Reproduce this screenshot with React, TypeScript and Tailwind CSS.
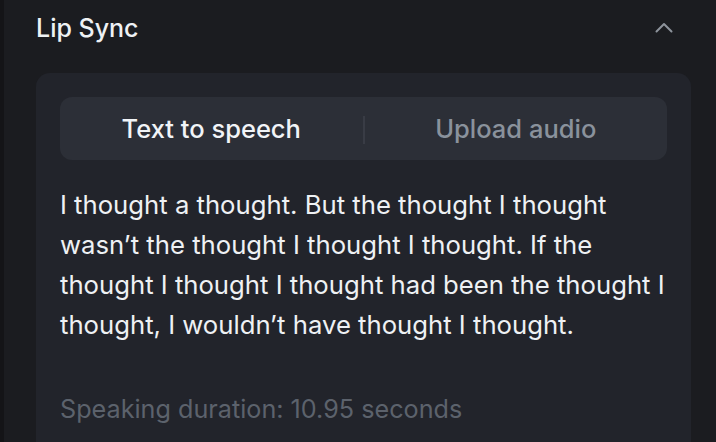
import React from 'react';

const App = () => {
  const [tab, setTab] = React.useState<'tts' | 'upload'>('tts');

  return (
    <div
      className="flex w-full h-[442px] overflow-hidden bg-[#1b1c20]"
      style={{ fontFamily: 'Inter, "Noto Sans", sans-serif' }}
    >
      <div className="w-1 shrink-0 bg-[#141417]" />
      <div className="flex-grow flex flex-col pl-8 pr-[25px]">
        <div className="flex items-center justify-between pt-[9px] pb-[25px]">
          <span className="text-[25px] leading-[39px] font-medium text-[#eef1f4]">
            Lip Sync
          </span>
          <svg
            width="18"
            height="11"
            viewBox="0 0 18 11"
            fill="none"
            className="mr-[18px] mt-[-2px]"
          >
            <polyline
              points="1.5,9.5 9,2 16.5,9.5"
              stroke="#8d939b"
              strokeWidth="2"
              strokeLinecap="round"
              strokeLinejoin="round"
            />
          </svg>
        </div>
        <div className="flex-grow rounded-t-[14px] bg-[#22242b] px-6 pt-6">
          <div className="flex items-center h-[63px] pt-[2px] rounded-[12px] bg-[#2c2f37]">
            <button
              onClick={() => setTab('tts')}
              className={`flex-1 text-center text-[25.5px] font-medium ${
                tab === 'tts' ? 'text-[#f1f4f7]' : 'text-[#8a929c]'
              }`}
            >
              Text to speech
            </button>
            <div className="w-[2px] h-[28px] bg-[#393c45]" />
            <button
              onClick={() => setTab('upload')}
              className={`flex-1 text-center text-[25.5px] font-medium ${
                tab === 'upload' ? 'text-[#f1f4f7]' : 'text-[#8a929c]'
              }`}
            >
              Upload audio
            </button>
          </div>
          <p className="mt-[25px] text-[25.7px] leading-[40px] text-[#eef1f4]">
            I thought a thought. But the thought I thought wasn’t the thought I
            thought I thought. If the thought I thought I thought had been the
            thought I thought, I wouldn’t have thought I thought.
          </p>
          <p className="mt-12 text-[25.2px] leading-[32px] text-[#5c626c]">
            Speaking duration: 10.95 seconds
          </p>
        </div>
      </div>
    </div>
  );
};

export default App;
